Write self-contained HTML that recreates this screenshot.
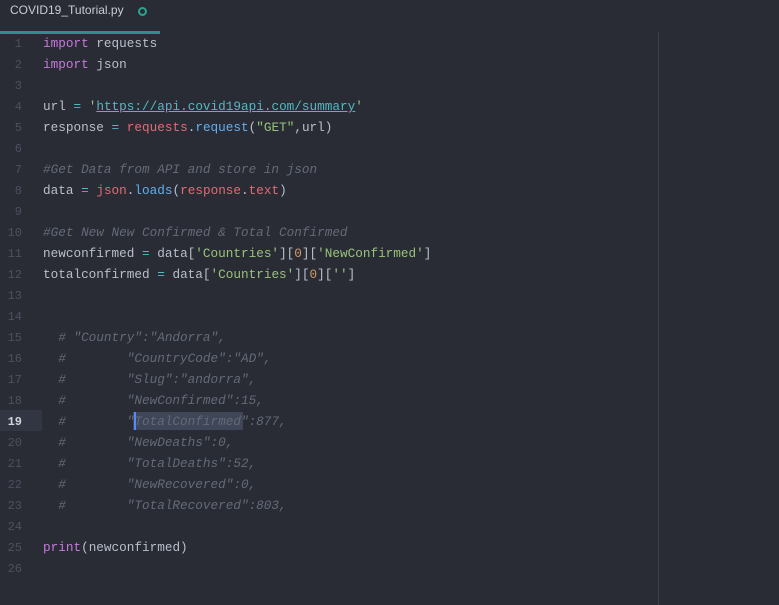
<!DOCTYPE html>
<html><head><style>
body{margin:0;width:779px;height:605px;background:#292c35;overflow:hidden;font-family:"Liberation Mono",monospace;}
.tab{position:absolute;left:0;top:0;width:160px;height:31px;border-bottom:3px solid #2a8f8f;}
.tab span{position:absolute;left:10px;top:3px;font:12px "Liberation Sans",sans-serif;color:#c8ccd4;}
.dot{position:absolute;left:138px;top:7px;width:5px;height:5px;border:2px solid #2aa58f;border-radius:50%;}
.guide{position:absolute;left:658px;top:32px;width:1px;height:573px;background:#3c404b;}
.ln{position:absolute;left:0;width:22px;text-align:right;font-size:12px;color:#4b5160;}
.cl{position:absolute;left:43px;font-size:12.7px;color:#b9bfca;white-space:pre;}
.k{color:#c678dd}.s{color:#98c379}.u{color:#56b6c2;text-decoration:underline}.r{color:#e06c75}.f{color:#61afef}.c{color:#636a78;font-style:italic}.n{color:#d19a66}.o{color:#56b6c2}
.hl{position:absolute;left:0;top:410px;width:42px;height:21px;background:#323642;}
.sel{position:absolute;left:133px;top:412px;width:110px;height:18px;background:#3e4657;}
.cur{position:absolute;left:134px;top:412px;width:2px;height:18px;background:#528bff;}
</style></head><body>
<div class="tab"><span>COVID19_Tutorial.py</span><div class="dot"></div></div>
<div class="guide"></div>
<div class="hl"></div><div class="sel"></div><div class="cur"></div>
<div id="c"></div>
<script>
var L=[
'<span class="k">import</span> requests',
'<span class="k">import</span> json',
'',
'url <span class="o">=</span> <span class="s">\'</span><span class="u">https://api.covid19api.com/summary</span><span class="s">\'</span>',
'response <span class="o">=</span> <span class="r">requests</span>.<span class="f">request</span>(<span class="s">"GET"</span>,url)',
'',
'<span class="c">#Get Data from API and store in json</span>',
'data <span class="o">=</span> <span class="r">json</span>.<span class="f">loads</span>(<span class="r">response</span>.<span class="r">text</span>)',
'',
'<span class="c">#Get New New Confirmed &amp; Total Confirmed</span>',
'newconfirmed <span class="o">=</span> data[<span class="s">\'Countries\'</span>][<span class="n">0</span>][<span class="s">\'NewConfirmed\'</span>]',
'totalconfirmed <span class="o">=</span> data[<span class="s">\'Countries\'</span>][<span class="n">0</span>][<span class="s">\'\'</span>]',
'','',
'<span class="c">  # "Country":"Andorra",</span>',
'<span class="c">  #        "CountryCode":"AD",</span>',
'<span class="c">  #        "Slug":"andorra",</span>',
'<span class="c">  #        "NewConfirmed":15,</span>',
'<span class="c">  #        "TotalConfirmed":877,</span>',
'<span class="c">  #        "NewDeaths":0,</span>',
'<span class="c">  #        "TotalDeaths":52,</span>',
'<span class="c">  #        "NewRecovered":0,</span>',
'<span class="c">  #        "TotalRecovered":803,</span>',
'',
'<span class="k">print</span>(newconfirmed)',
''];
var h='';
for(var i=0;i<L.length;i++){var t=36+i*21;
h+='<div class="ln" style="top:'+(t+1)+'px'+(i==18?';color:#d0d4dc;font-weight:bold':'')+'">'+(i+1)+'</div><div class="cl" style="top:'+t+'px">'+L[i]+'</div>';}
document.getElementById('c').innerHTML=h;
</script>
</body></html>
